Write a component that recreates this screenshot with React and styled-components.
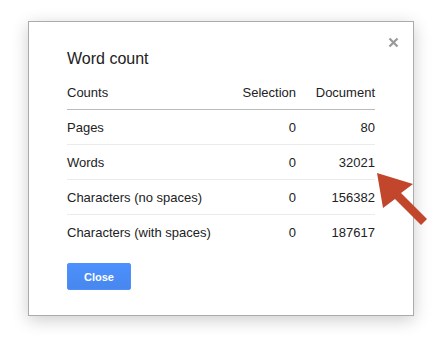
import React from 'react';
import styled, { createGlobalStyle } from 'styled-components';

const GlobalStyle = createGlobalStyle`
  html, body {
    margin: 0;
    padding: 0;
    background: #fff;
  }
  body {
    font-family: "Liberation Sans", Arial, sans-serif;
    color: #222;
  }
`;

const Page = styled.div`
  position: relative;
  width: 439px;
  height: 338px;
  padding: 21px 0 0 28px;
  box-sizing: border-box;
  overflow: hidden;
`;

const Dialog = styled.div`
  position: relative;
  width: 386px;
  height: 295px;
  box-sizing: border-box;
  border: 1px solid rgba(0, 0, 0, 0.33);
  box-shadow: 0 4px 16px rgba(0, 0, 0, 0.2);
  background: #fff;
  padding: 27px 38px 0 38px;
`;

const Title = styled.div`
  font-size: 16px;
  line-height: 20px;
  color: #222;
`;

const CloseX = styled.button`
  position: absolute;
  top: 15px;
  right: 14px;
  width: 11px;
  height: 11px;
  padding: 0;
  border: 0;
  background: none;
  display: flex;
`;

const Table = styled.div`
  margin-top: 6px;
  display: grid;
  grid-template-columns: 1fr 70px 79px;
  font-size: 13px;
`;

const Cell = styled.div`
  height: 34px;
  display: flex;
  align-items: center;
  justify-content: ${p => (p.$num ? 'flex-end' : 'flex-start')};
  border-bottom: 1px solid ${p => (p.$head ? '#bbb' : p.$last ? 'transparent' : '#ebebeb')};
`;

const Button = styled.button`
  margin-top: 13px;
  width: 64px;
  height: 27px;
  border: 1px solid #3079ed;
  border-color: #4d90fe;
  border-radius: 2px;
  background: linear-gradient(#4d90fe, #4787ed);
  color: #fff;
  font-family: "Liberation Sans", Arial, sans-serif;
  font-size: 11px;
  font-weight: bold;
  padding: 0;
`;

const Arrow = styled.svg`
  position: absolute;
  left: 0;
  top: 0;
  pointer-events: none;
`;

const rows = [
  ['Pages', '0', '80'],
  ['Words', '0', '32021'],
  ['Characters (no spaces)', '0', '156382'],
  ['Characters (with spaces)', '0', '187617'],
];

function App() {
  return (
    <Page>
      <GlobalStyle />
      <Dialog>
        <CloseX aria-label="Close">
          <svg width="11" height="11" viewBox="0 0 11 11">
            <path d="M1.5 1.5 L9.5 9.5 M9.5 1.5 L1.5 9.5" stroke="#999" strokeWidth="2.2" />
          </svg>
        </CloseX>
        <Title>Word count</Title>
        <Table>
          <Cell $head>Counts</Cell>
          <Cell $head $num>Selection</Cell>
          <Cell $head $num>Document</Cell>
          {rows.map((r, i) => (
            <React.Fragment key={r[0]}>
              <Cell $last={i === rows.length - 1}>{r[0]}</Cell>
              <Cell $num $last={i === rows.length - 1}>{r[1]}</Cell>
              <Cell $num $last={i === rows.length - 1}>{r[2]}</Cell>
            </React.Fragment>
          ))}
        </Table>
        <Button>Close</Button>
      </Dialog>
      <Arrow width="439" height="338" viewBox="0 0 439 338">
        <polygon
          points="377,173 413,184 401,193 427,219 421,225 395,199 383,208"
          fill="#c1462c"
        />
      </Arrow>
    </Page>
  );
}

export default App;
